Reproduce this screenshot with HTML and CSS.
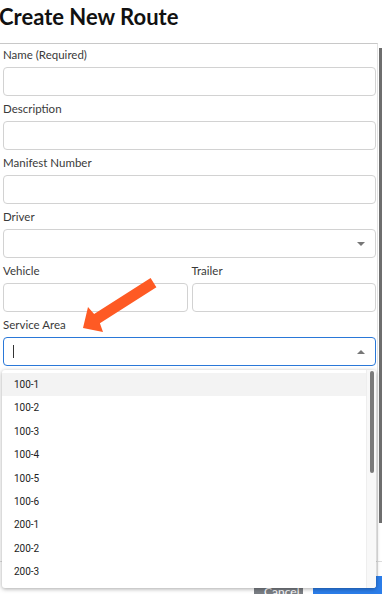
FILE: index.html
```html
<!DOCTYPE html>
<html lang="en">
<head>
    <meta charset="UTF-8">
    <meta name="viewport" content="width=device-width, initial-scale=1.0">
    <title>Create New Route</title>
    <link rel="stylesheet" href="styles.css">
</head>
<body>
    <div class="page">
        <h1 class="title">Create New Route</h1>
        <div class="modal-body">
            <form class="route-form">
                <div class="field">
                    <label for="name">Name (Required)</label>
                    <input type="text" id="name" name="name">
                </div>
                <div class="field">
                    <label for="description">Description</label>
                    <input type="text" id="description" name="description">
                </div>
                <div class="field">
                    <label for="manifest">Manifest Number</label>
                    <input type="text" id="manifest" name="manifest">
                </div>
                <div class="field">
                    <label>Driver</label>
                    <div class="select"><span></span><span class="caret caret-down"></span></div>
                </div>
                <div class="field-row">
                    <div class="field">
                        <label for="vehicle">Vehicle</label>
                        <input type="text" id="vehicle" name="vehicle">
                    </div>
                    <div class="field">
                        <label for="trailer">Trailer</label>
                        <input type="text" id="trailer" name="trailer">
                    </div>
                </div>
                <div class="field">
                    <label>Service Area</label>
                    <div class="select focused"><span class="text-cursor"></span><span class="caret caret-up"></span></div>
                </div>
            </form>
            <div class="modal-footer">
                <button type="button" class="btn btn-cancel">Cancel</button>
                <button type="button" class="btn btn-create">Create Route</button>
            </div>
        </div>

        <div class="dropdown">
            <ul class="dropdown-list">
                <li class="dropdown-item active">100-1</li>
                <li class="dropdown-item">100-2</li>
                <li class="dropdown-item">100-3</li>
                <li class="dropdown-item">100-4</li>
                <li class="dropdown-item">100-5</li>
                <li class="dropdown-item">100-6</li>
                <li class="dropdown-item">200-1</li>
                <li class="dropdown-item">200-2</li>
                <li class="dropdown-item">200-3</li>
            </ul>
            <div class="dropdown-track"><div class="dropdown-thumb"></div></div>
        </div>

        <div class="page-scrollbar"></div>

        <!-- annotation arrow pointing at Service Area -->
        <svg class="annotation" width="382" height="594" viewBox="0 0 382 594">
            <polygon points="150.6,277.9 94.1,313.9 88,307 83,328 103,332 99.9,323.2 156.4,287.2" fill="#fe5a24"/>
        </svg>
    </div>
</body>
</html>
```

FILE: styles.css
```css
* {
    box-sizing: border-box;
}

body {
    margin: 0;
    font-family: Lato, "Open Sans", sans-serif;
    color: #333;
    background: #fff;
    overflow: hidden;
}

.page {
    position: relative;
    width: 382px;
    height: 594px;
    overflow: hidden;
}

.title {
    margin: 0 0 0 -1px;
    padding-top: 3px;
    height: 43px;
    font-size: 22px;
    line-height: 27px;
    font-weight: 700;
    color: #111;
}

.modal-body {
    width: 378px;
    border-top: 1px solid #c8c8c8;
    border-right: 1px solid #e2e2e2;
}

.route-form {
    padding: 3px 1px 190px 3px;
}

.field {
    margin-bottom: 5px;
}

.field label {
    display: block;
    font-size: 11.5px;
    line-height: 16px;
    margin-bottom: 4px;
    color: #3a3a3a;
}

.field input,
.select {
    display: block;
    width: 100%;
    height: 29px;
    margin: 0;
    padding: 0 8px;
    border: 1px solid #d2d2d2;
    border-radius: 4px;
    background: #fff;
    font-family: inherit;
}

.field-row {
    display: grid;
    grid-template-columns: 1fr 1fr;
    gap: 4px;
}

.select {
    display: flex;
    align-items: center;
    justify-content: space-between;
    padding: 0 10px 0 9px;
}

.select.focused {
    border-color: #2a78d8;
}

.text-cursor {
    width: 1px;
    height: 13px;
    background: #333;
}

.caret {
    width: 0;
    height: 0;
    border-left: 4px solid transparent;
    border-right: 4px solid transparent;
}

.caret-down {
    border-top: 4px solid #777;
}

.caret-up {
    border-bottom: 4px solid #777;
}

.modal-footer {
    display: flex;
    justify-content: flex-end;
    gap: 10px;
    margin-right: -10px;
    padding-top: 14px;
    border-top: 1px solid #dcdcdc;
}

.btn {
    height: 30px;
    padding: 0 10px;
    border: none;
    border-radius: 3px;
    color: #fff;
    font-family: inherit;
    font-size: 12px;
}

.btn-cancel {
    width: 49px;
    background: #7a7e84;
}

.btn-create {
    width: 74px;
    background: #2b7de9;
}

.dropdown {
    position: absolute;
    top: 370px;
    left: 2px;
    width: 374px;
    height: 218px;
    display: flex;
    background: #fff;
    border-radius: 3px;
    box-shadow: 0 1px 4px rgba(0, 0, 0, 0.35);
    overflow: hidden;
}

.dropdown-list {
    flex: 1;
    margin: 0;
    padding: 3px 0 0 0;
    list-style: none;
}

.dropdown-item {
    height: 23.4px;
    line-height: 23.4px;
    padding-left: 12px;
    font-family: Roboto, sans-serif;
    font-size: 10px;
    color: #222;
}

.dropdown-item.active {
    background: #f3f3f3;
}

.dropdown-track {
    width: 10px;
    padding: 1px 0 0 3px;
    background: #f8f8f8;
    border-left: 1px solid #eeeeee;
}

.dropdown-thumb {
    width: 4px;
    height: 102px;
    border-radius: 2px;
    background: #7a7a7a;
}

.page-scrollbar {
    position: absolute;
    top: 48px;
    right: 0;
    width: 3px;
    height: 475px;
    background: #6e6e6e;
}

.annotation {
    position: absolute;
    top: 0;
    left: 0;
    pointer-events: none;
}
```
